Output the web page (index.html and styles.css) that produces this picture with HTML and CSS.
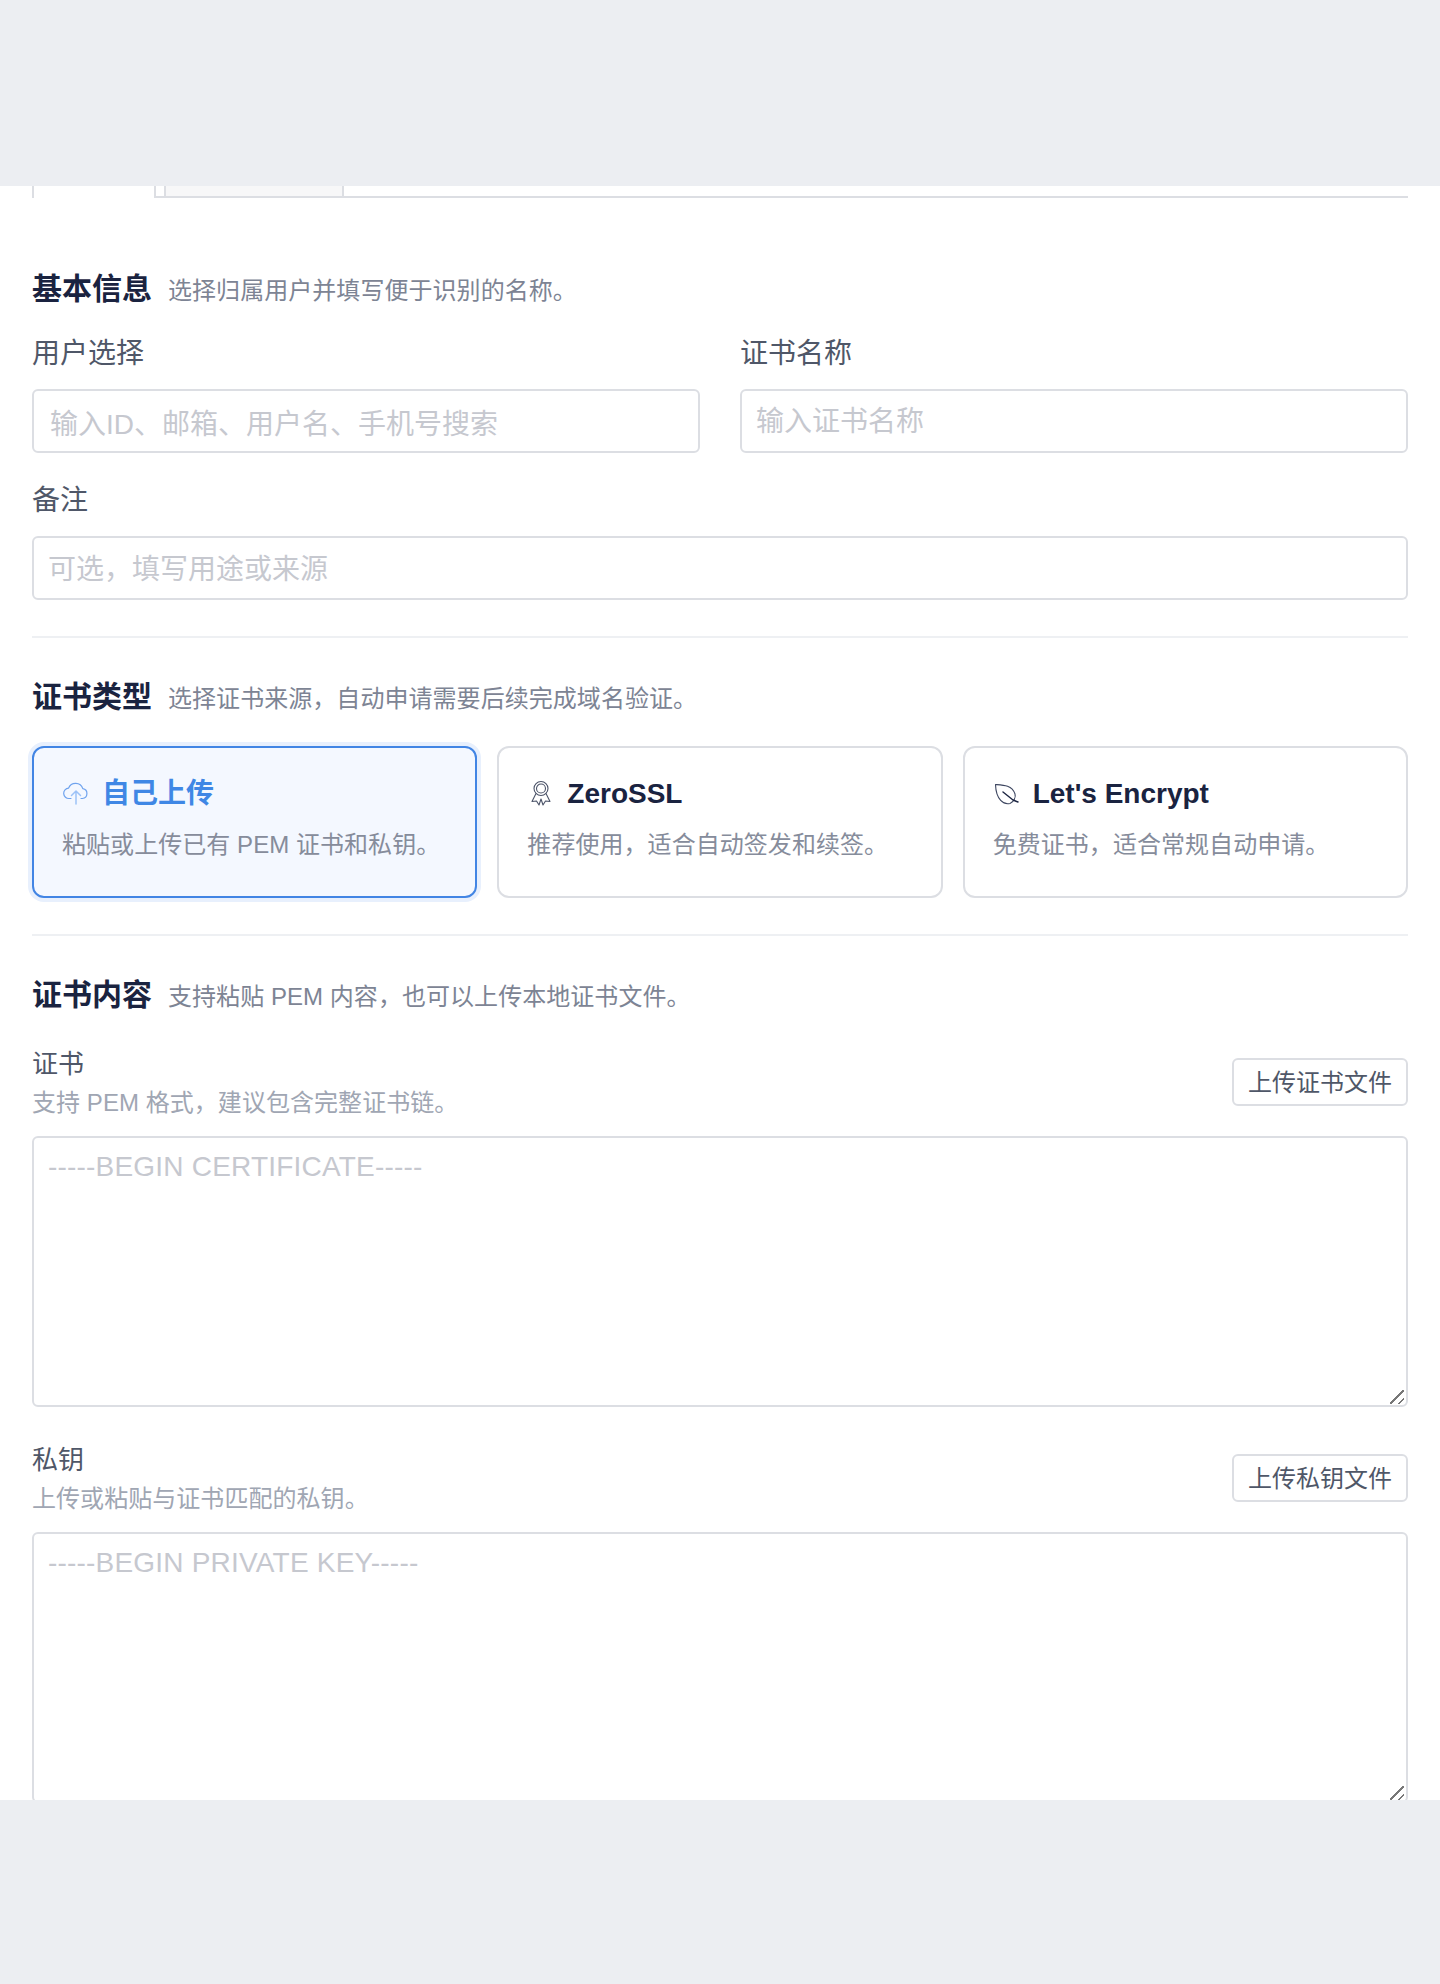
FILE: index.html
```html
<!DOCTYPE html>
<html lang="zh-CN">
<head>
    <meta charset="UTF-8">
    <meta name="viewport" content="width=device-width, initial-scale=1.0">
    <title>添加证书</title>
    <link rel="stylesheet" href="styles.css">
</head>
<body>
    <div class="panel">
        <!-- Tabs, mostly cut off by the top of the panel -->
        <div class="tabs">
            <div class="tab active"></div>
            <div class="tab"></div>
        </div>

        <!-- Basic info -->
        <div class="section-head first">
            <h2>基本信息</h2>
            <p>选择归属用户并填写便于识别的名称。</p>
        </div>
        <div class="form-row">
            <div class="field">
                <label>用户选择</label>
                <input type="text" class="search-input" placeholder="输入ID、邮箱、用户名、手机号搜索">
            </div>
            <div class="field">
                <label>证书名称</label>
                <input type="text" placeholder="输入证书名称">
            </div>
        </div>
        <div class="field remark">
            <label>备注</label>
            <input type="text" placeholder="可选，填写用途或来源">
        </div>

        <hr class="divider">

        <!-- Certificate type -->
        <div class="section-head">
            <h2>证书类型</h2>
            <p>选择证书来源，自动申请需要后续完成域名验证。</p>
        </div>
        <div class="type-cards">
            <div class="type-card selected">
                <div class="card-title">
                    <svg class="card-icon" viewBox="0 0 28 28" fill="none" stroke-linecap="round" stroke-linejoin="round">
                        <path stroke="#6fa3ee" stroke-width="1.2" d="M9 18.5H7.2a5.2 5.2 0 0 1-.6-10.4A7.6 7.6 0 0 1 20.8 8.6a5 5 0 0 1-.4 9.9H19"/>
                        <path stroke="#9cc2f7" stroke-width="1.5" d="M14 24V11M9.500 15.500 14 11l4.500 4.500"/>
                    </svg>
                    <span>自己上传</span>
                </div>
                <p>粘贴或上传已有 PEM 证书和私钥。</p>
            </div>
            <div class="type-card">
                <div class="card-title">
                    <svg class="card-icon" viewBox="0 0 28 28" fill="none" stroke="#4b5368" stroke-width="1.1" stroke-linejoin="round">
                        <circle cx="14" cy="8.500" r="7"/>
                        <circle cx="14" cy="8.500" r="4.500"/>
                        <path d="M9 13.500 5 21.500l4.500-.5 2.500 4 2-6 2 6 2.500-4 4.500.5-4-8"/>
                    </svg>
                    <span>ZeroSSL</span>
                </div>
                <p>推荐使用，适合自动签发和续签。</p>
            </div>
            <div class="type-card">
                <div class="card-title">
                    <svg class="card-icon" viewBox="0 0 28 28" fill="none" stroke="#3d4660" stroke-width="1.1" stroke-linejoin="round" stroke-linecap="round">
                        <path d="M2.500 4.500C10 5 19 5 22 14c1 3-1 8-5 9.500C11 25 3 20 2.500 4.500Z"/>
                        <path stroke="#1a2340" stroke-width="1.400" d="M10 12l10 8 5 2"/>
                    </svg>
                    <span>Let's Encrypt</span>
                </div>
                <p>免费证书，适合常规自动申请。</p>
            </div>
        </div>

        <hr class="divider">

        <!-- Certificate content -->
        <div class="section-head">
            <h2>证书内容</h2>
            <p>支持粘贴 PEM 内容，也可以上传本地证书文件。</p>
        </div>
        <div class="pem-field">
            <div class="pem-head">
                <div>
                    <div class="pem-label">证书</div>
                    <div class="pem-hint">支持 PEM 格式，建议包含完整证书链。</div>
                </div>
                <button class="upload-btn">上传证书文件</button>
            </div>
            <textarea placeholder="-----BEGIN CERTIFICATE-----"></textarea>
        </div>
        <div class="pem-field">
            <div class="pem-head">
                <div>
                    <div class="pem-label">私钥</div>
                    <div class="pem-hint">上传或粘贴与证书匹配的私钥。</div>
                </div>
                <button class="upload-btn">上传私钥文件</button>
            </div>
            <textarea placeholder="-----BEGIN PRIVATE KEY-----"></textarea>
        </div>
    </div>
</body>
</html>
```

FILE: styles.css
```css
* {
    box-sizing: border-box;
}

html, body {
    height: 1984px;
    overflow: hidden;
}

body {
    margin: 0;
    padding-top: 186px;
    background-color: #eceef2;
    font-family: "Liberation Sans", "Noto Sans CJK SC", sans-serif;
}

.panel {
    height: 1614px;
    padding: 0 32px;
    overflow: hidden;
    background-color: #fff;
}

.tabs {
    display: flex;
    height: 12px;
    border-bottom: 2px solid #dcdee3;
}

.tab {
    width: 180px;
    height: 10px;
    margin-left: 8px;
    border: 2px solid #dcdee3;
    border-top: none;
    border-bottom: none;
    background-color: #f7f7f8;
}

.tab.active {
    width: 124px;
    height: 12px;
    margin-left: 0;
    background-color: #fff;
    position: relative;
    z-index: 1;
}

.section-head {
    display: flex;
    align-items: baseline;
    gap: 16px;
    margin-top: 38px;
    height: 42px;
}

.section-head.first {
    margin-top: 70px;
}

.section-head h2 {
    margin: 0;
    font-size: 30px;
    line-height: 42px;
    font-weight: 700;
    color: #1a2340;
}

.section-head p {
    margin: 0;
    font-size: 24px;
    letter-spacing: 0.05px;
    color: #7d8494;
}

.form-row {
    display: grid;
    grid-template-columns: 1fr 1fr;
    gap: 40px;
    margin-top: 23px;
}

.field label {
    display: block;
    margin-bottom: 14px;
    font-size: 28px;
    line-height: 42px;
    color: #4f5768;
}

.field input {
    display: block;
    width: 100%;
    height: 64px;
    padding: 2px 14px 0;
    border: 2px solid #dcdee3;
    border-radius: 6px;
    font-family: inherit;
    font-size: 28px;
    outline: none;
}

.field .search-input {
    padding: 7px 14px 0 16px;
}

input::placeholder, textarea::placeholder {
    color: #c6c8cf;
    opacity: 1;
}

.remark {
    margin-top: 27px;
}

.remark input {
    padding-top: 4px;
}

.divider {
    height: 2px;
    margin: 36px 0 0;
    border: none;
    background-color: #eef0f3;
}

.type-cards {
    display: grid;
    grid-template-columns: repeat(3, 1fr);
    gap: 20px;
    margin-top: 28px;
}

.type-card {
    height: 152px;
    padding: 27px 28px 0;
    border: 2px solid #dcdee3;
    border-radius: 12px;
    background-color: #fff;
}

.type-card.selected {
    border-color: #4285e4;
    background-color: #f4f8ff;
    box-shadow: 0 0 0 4px #e8f0fd;
}

.card-title {
    display: flex;
    align-items: center;
    gap: 12px;
    height: 38px;
    font-size: 28px;
    line-height: 40px;
    font-weight: 700;
    color: #1a2340;
}

.selected .card-title {
    color: #3f87e5;
}

.card-icon {
    width: 28px;
    height: 28px;
    flex-shrink: 0;
}

.type-card p {
    margin: 14px 0 0;
    font-size: 24px;
    line-height: 36px;
    letter-spacing: 0.05px;
    color: #868c9b;
}

.pem-field {
    margin-top: 30px;
}

.pem-field + .pem-field {
    margin-top: 35px;
}

.pem-head {
    display: flex;
    align-items: flex-start;
    justify-content: space-between;
    margin-bottom: 16px;
}

.pem-label {
    font-size: 26px;
    line-height: 36px;
    color: #4f5768;
}

.pem-hint {
    margin-top: 4px;
    font-size: 24px;
    line-height: 34px;
    letter-spacing: 0.05px;
    color: #a0a6b3;
}

.upload-btn {
    height: 48px;
    margin-top: 12px;
    padding: 0 14px 4px;
    border: 2px solid #dcdee3;
    border-radius: 6px;
    background-color: #fff;
    font-family: inherit;
    font-size: 24px;
    color: #4f5768;
}

textarea {
    display: block;
    width: 100%;
    height: 271px;
    padding: 11px 14px;
    border: 2px solid #dcdee3;
    border-radius: 6px;
    font-family: inherit;
    font-size: 28px;
    line-height: 36px;
    letter-spacing: 0.2px;
    outline: none;
    resize: none;
    background: linear-gradient(135deg, transparent 9px, #777 9px, #777 10.8px, transparent 10.8px, transparent 14.9px, #777 14.9px, #777 16.7px, transparent 16.7px) no-repeat right 2px bottom 1px / 14px 14px;
}
```
